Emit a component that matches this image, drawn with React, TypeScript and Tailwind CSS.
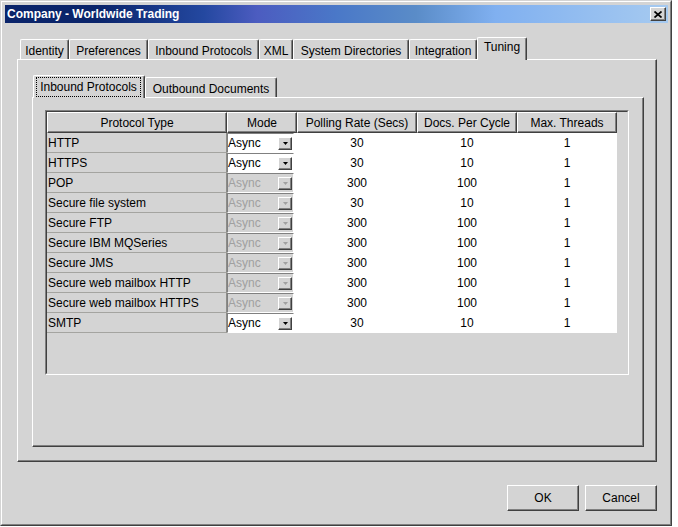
import React from "react";

const outerTabs = [
  { label: "Identity", width: 49 },
  { label: "Preferences", width: 79 },
  { label: "Inbound Protocols", width: 111 },
  { label: "XML", width: 34 },
  { label: "System Directories", width: 116 },
  { label: "Integration", width: 68 },
  { label: "Tuning", width: 50, selected: true },
];

const rows = [
  { name: "HTTP", enabled: true, rate: 30, docs: 10, threads: 1 },
  { name: "HTTPS", enabled: true, rate: 30, docs: 10, threads: 1 },
  { name: "POP", enabled: false, rate: 300, docs: 100, threads: 1 },
  { name: "Secure file system", enabled: false, rate: 30, docs: 10, threads: 1 },
  { name: "Secure FTP", enabled: false, rate: 300, docs: 100, threads: 1 },
  { name: "Secure IBM MQSeries", enabled: false, rate: 300, docs: 100, threads: 1 },
  { name: "Secure JMS", enabled: false, rate: 300, docs: 100, threads: 1 },
  { name: "Secure web mailbox HTTP", enabled: false, rate: 300, docs: 100, threads: 1 },
  { name: "Secure web mailbox HTTPS", enabled: false, rate: 300, docs: 100, threads: 1 },
  { name: "SMTP", enabled: true, rate: 30, docs: 10, threads: 1 },
];

const columns = [
  { title: "Protocol Type", width: 180 },
  { title: "Mode", width: 70 },
  { title: "Polling Rate (Secs)", width: 120 },
  { title: "Docs. Per Cycle", width: 100 },
  { title: "Max. Threads", width: 100 },
];

function TitleBar() {
  return (
    <div className="h-[18px] flex items-center justify-between pl-[2px] pr-[2px] bg-[linear-gradient(to_right,#0a246a_0%,#0a246a_14%,#2448a0_30%,#4c5cc0_38%,#4a78c8_50%,#5a8cc8_62%,#80b0f0_74%,#a6caf0_100%)]">
      <span className="text-white font-bold text-[12px] leading-none">Company - Worldwide Trading</span>
      <div className="w-[16px] h-[14px] bg-[#d4d4d4] border border-t-white border-l-white border-r-[#404040] border-b-[#404040] shadow-[inset_-1px_-1px_0_#808080] flex items-center justify-center">
        <svg width="8" height="7" viewBox="0 0 8 7">
          <path d="M0.5 0.5 L7.5 6.5 M7.5 0.5 L0.5 6.5" stroke="#000" strokeWidth="1.7" fill="none" />
        </svg>
      </div>
    </div>
  );
}

function OuterTab({ label, width, selected }: { label: string; width: number; selected?: boolean }) {
  if (selected) {
    return (
      <div
        className="h-[23px] mb-[-1px] relative z-10 bg-[#d4d4d4] border-t border-l border-r border-t-white border-l-white border-r-[#404040] shadow-[inset_-1px_0_0_#808080] rounded-t-[2px] flex items-start justify-center pt-[3px] leading-none"
        style={{ width }}
      >
        {label}
      </div>
    );
  }
  return (
    <div
      className="h-[20px] bg-[#d4d4d4] border-t border-l border-r border-t-white border-l-white border-r-[#404040] shadow-[inset_-1px_0_0_#808080] rounded-t-[2px] flex items-center justify-center pt-[2px] leading-none"
      style={{ width }}
    >
      {label}
    </div>
  );
}

function Combo({ enabled }: { enabled: boolean }) {
  return (
    <div
      className={`w-[67px] h-[20px] flex items-center justify-between border border-t-[#808080] border-l-[#808080] border-r-white border-b-white ${
        enabled ? "bg-white text-black" : "bg-[#d4d4d4] text-[#a0a0a0]"
      }`}
    >
      <span className="leading-none pl-[0px]">Async</span>
      <div className="w-[14px] h-[13px] mr-[1px] bg-[#d4d4d4] border border-t-white border-l-white border-r-[#404040] border-b-[#404040] shadow-[inset_-1px_-1px_0_#808080] flex items-center justify-center">
        <svg width="5" height="3" viewBox="0 0 5 3">
          <path d="M0 0 H5 L2.5 3 Z" fill={enabled ? "#000" : "#a0a0a0"} />
        </svg>
      </div>
    </div>
  );
}

function ProtocolTable() {
  return (
    <div className="w-[584px] h-[265px] border border-t-[#808080] border-l-[#808080] border-r-white border-b-white">
      <div className="h-full border border-t-[#404040] border-l-[#404040] border-r-[#d4d4d4] border-b-[#d4d4d4] bg-[#d4d4d4]">
        <div className="w-[570px]">
          <div className="flex h-[21px]">
            {columns.map((c) => (
              <div
                key={c.title}
                className="h-[21px] border border-t-white border-l-white border-r-[#404040] border-b-[#404040] shadow-[inset_-1px_-1px_0_#808080] flex items-center justify-center leading-none"
                style={{ width: c.width }}
              >
                {c.title}
              </div>
            ))}
          </div>
          {rows.map((r) => (
            <div key={r.name} className="flex h-[20px] bg-white">
              <div className="w-[180px] h-[20px] bg-[#d4d4d4] border-b border-r border-b-[#a4a4a0] border-r-[#8c8c88] flex items-center pl-[1px] leading-none">
                {r.name}
              </div>
              <div className="w-[70px] h-[20px]">
                <Combo enabled={r.enabled} />
              </div>
              <div className="w-[120px] flex items-center justify-center leading-none">{r.rate}</div>
              <div className="w-[100px] flex items-center justify-center leading-none">{r.docs}</div>
              <div className="w-[100px] flex items-center justify-center leading-none">{r.threads}</div>
            </div>
          ))}
        </div>
      </div>
    </div>
  );
}

function Button({ label }: { label: string }) {
  return (
    <div className="w-[72px] h-[26px] bg-[#d4d4d4] border border-t-white border-l-white border-r-[#404040] border-b-[#404040] shadow-[inset_-1px_-1px_0_#808080] flex items-center justify-center leading-none">
      {label}
    </div>
  );
}

export default function App() {
  return (
    <div className="w-[678px] h-[527px] bg-white font-['Liberation_Sans',Arial,sans-serif] text-[12px] text-black">
      <div className="w-[672px] h-[526px] bg-[#d4d4d4] border border-t-[#d4d4d4] border-l-[#d4d4d4] border-r-[#404040] border-b-[#404040]">
        <div className="h-full border border-t-white border-l-white border-r-[#808080] border-b-[#808080] pt-[3px] pl-[3px] pr-[2px] flex flex-col">
          <TitleBar />

          <div className="ml-[12px] mr-[11px] mt-[14px] flex flex-col">
            <div className="flex items-end h-[22px] pl-[3px]">
              {outerTabs.map((t) => (
                <OuterTab key={t.label} {...t} />
              ))}
            </div>

            <div className="h-[403px] border border-t-white border-l-white border-r-[#404040] border-b-[#404040] shadow-[inset_-1px_-1px_0_#808080] pt-[15px] pl-[14px] pr-[12px]">
              <div className="flex items-end h-[22px] pl-[1px]">
                <div className="w-[112px] h-[23px] mb-[-1px] relative z-10 bg-[#d4d4d4] border-t border-l border-r border-t-white border-l-white border-r-[#404040] shadow-[inset_-1px_0_0_#808080] rounded-t-[2px] pt-[1px] pl-[2px] pr-[3px]">
                  <div className="h-[20px] border border-dotted border-black flex items-center justify-center leading-none">
                    Inbound Protocols
                  </div>
                </div>
                <div className="w-[132px] h-[20px] bg-[#d4d4d4] border-t border-l border-r border-t-white border-l-white border-r-[#404040] shadow-[inset_-1px_0_0_#808080] rounded-t-[2px] flex items-center justify-center pt-[2px] leading-none">
                  Outbound Documents
                </div>
              </div>

              <div className="h-[350px] border border-t-white border-l-white border-r-[#404040] border-b-[#404040] shadow-[inset_-1px_-1px_0_#808080] pt-[12px] pl-[12px]">
                <ProtocolTable />
              </div>
            </div>
          </div>

          <div className="flex justify-end gap-[6px] mt-[23px] mr-[11px]">
            <Button label="OK" />
            <Button label="Cancel" />
          </div>
        </div>
      </div>
    </div>
  );
}
